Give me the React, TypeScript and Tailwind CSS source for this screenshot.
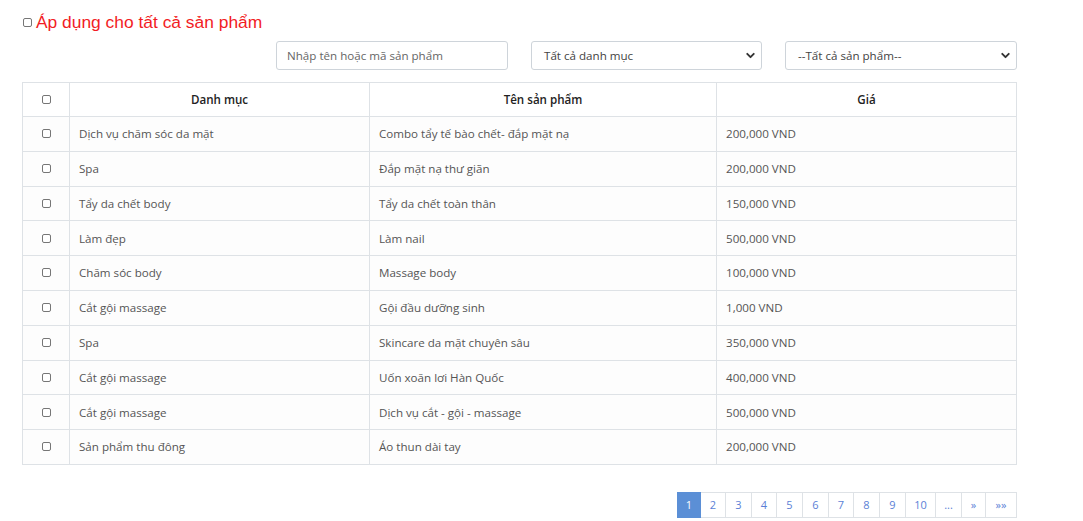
import { ChevronDown } from "lucide-react";

const rows = [
  ["Dịch vụ chăm sóc da mặt", "Combo tẩy tế bào chết- đắp mặt nạ", "200,000 VND"],
  ["Spa", "Đắp mặt nạ thư giãn", "200,000 VND"],
  ["Tẩy da chết body", "Tẩy da chết toàn thân", "150,000 VND"],
  ["Làm đẹp", "Làm nail", "500,000 VND"],
  ["Chăm sóc body", "Massage body", "100,000 VND"],
  ["Cắt gội massage", "Gội đầu dưỡng sinh", "1,000 VND"],
  ["Spa", "Skincare da mặt chuyên sâu", "350,000 VND"],
  ["Cắt gội massage", "Uốn xoăn lơi Hàn Quốc", "400,000 VND"],
  ["Cắt gội massage", "Dịch vụ cắt - gội - massage", "500,000 VND"],
  ["Sản phẩm thu đông", "Áo thun dài tay", "200,000 VND"],
];

const pages = [
  { label: "1", w: "w-[24px]" },
  { label: "2", w: "w-[25px]" },
  { label: "3", w: "w-[26px]" },
  { label: "4", w: "w-[25px]" },
  { label: "5", w: "w-[26px]" },
  { label: "6", w: "w-[26px]" },
  { label: "7", w: "w-[25px]" },
  { label: "8", w: "w-[26px]" },
  { label: "9", w: "w-[26px]" },
  { label: "10", w: "w-[30px]" },
  { label: "...", w: "w-[26px]" },
  { label: "»", w: "w-[24px]" },
  { label: "»»", w: "w-[31px]" },
];

function Box() {
  return <span className="inline-block h-[9px] w-[9px] rounded-[2px] border border-[#767676] bg-white" />;
}

export default function App() {
  return (
    <div className="min-h-[521px] bg-white font-['Open_Sans',sans-serif] text-[11.6px] text-[#555]">
      {/* title */}
      <div className="flex items-center gap-[4px] pl-[23px] pt-[11px]">
        <Box />
        <span className="font-['Liberation_Sans',sans-serif] text-[17.4px] leading-[22px] text-[#f21c24]">
          Áp dụng cho tất cả sản phẩm
        </span>
      </div>

      {/* filters */}
      <div className="mt-[8px] flex justify-end gap-[23px] pr-[66px]">
        <div className="flex h-[29px] w-[232px] items-center rounded-[3px] border border-[#ced4da] px-[10px] text-[#666]">
          Nhập tên hoặc mã sản phẩm
        </div>
        <div className="flex h-[29px] w-[231px] items-center justify-between rounded-[3px] border border-[#ced4da] pl-[12px] pr-[4px] text-[#444]">
          <span>Tất cả danh mục</span>
          <ChevronDown className="h-[13px] w-[13px] text-[#333]" strokeWidth={3.5} />
        </div>
        <div className="flex h-[29px] w-[232px] items-center justify-between rounded-[3px] border border-[#ced4da] pl-[12px] pr-[4px] text-[#444]">
          <span>--Tất cả sản phẩm--</span>
          <ChevronDown className="h-[13px] w-[13px] text-[#333]" strokeWidth={3.5} />
        </div>
      </div>

      {/* table */}
      <div className="ml-[22px] mt-[12px] w-[995px]">
        <table className="w-full border-collapse">
          <thead>
            <tr className="h-[34px]">
              <th className="w-[47px] border border-[#dee2e6] text-center">
                <Box />
              </th>
              <th className="w-[300px] border border-[#dee2e6] font-semibold text-[#222]">Danh mục</th>
              <th className="w-[347px] border border-[#dee2e6] font-semibold text-[#222]">Tên sản phẩm</th>
              <th className="border border-[#dee2e6] font-semibold text-[#222]">Giá</th>
            </tr>
          </thead>
          <tbody>
            {rows.map((r, i) => (
              <tr key={i} className="h-[34.8px] bg-[#fdfdfd]">
                <td className="border border-[#dee2e6] text-center">
                  <Box />
                </td>
                <td className="border border-[#dee2e6] pl-[9px]">{r[0]}</td>
                <td className="border border-[#dee2e6] pl-[9px]">{r[1]}</td>
                <td className="border border-[#dee2e6] pl-[9px]">{r[2]}</td>
              </tr>
            ))}
          </tbody>
        </table>
      </div>

      {/* pagination */}
      <div className="mt-[27px] flex justify-end pr-[66px]">
        <div className="flex text-[11px]">
          {pages.map((p, i) => (
            <span
              key={p.label}
              className={
                i === 0
                  ? `flex h-[26px] ${p.w} items-center justify-center border border-[#5b8fd6] bg-[#5b8fd6] text-white`
                  : `flex h-[26px] ${p.w} items-center justify-center border border-l-0 border-[#dee2e6] text-[#5b7fd6]`
              }
            >
              {p.label}
            </span>
          ))}
        </div>
      </div>
    </div>
  );
}
